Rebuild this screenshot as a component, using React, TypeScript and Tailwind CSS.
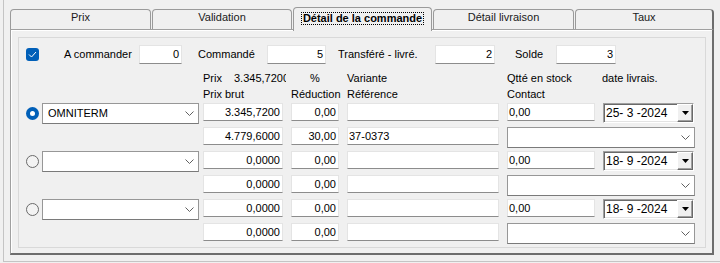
import React from "react";

type MainRow = {
  kind: "main";
  checked: boolean;
  combo: string;
  price: string;
  red: string;
  variante: string;
  qty: string;
  date: string;
};

type SubRow = {
  kind: "sub";
  price: string;
  red: string;
  ref: string;
};

const ROWS: (MainRow | SubRow)[] = [
  { kind: "main", checked: true, combo: "OMNITERM", price: "3.345,7200", red: "0,00", variante: "", qty: "0,00", date: "25- 3 -2024" },
  { kind: "sub", price: "4.779,6000", red: "30,00", ref: "37-0373" },
  { kind: "main", checked: false, combo: "", price: "0,0000", red: "0,00", variante: "", qty: "0,00", date: "18- 9 -2024" },
  { kind: "sub", price: "0,0000", red: "0,00", ref: "" },
  { kind: "main", checked: false, combo: "", price: "0,0000", red: "0,00", variante: "", qty: "0,00", date: "18- 9 -2024" },
  { kind: "sub", price: "0,0000", red: "0,00", ref: "" },
];

const TABS = ["Prix", "Validation", "Détail de la commande", "Détail livraison", "Taux"];

function Chevron() {
  return (
    <svg width="9" height="5" viewBox="0 0 9 5" className="shrink-0">
      <polyline points="0.5,0.5 4.5,4.5 8.5,0.5" fill="none" stroke="#606060" strokeWidth="1" />
    </svg>
  );
}

function TextBox({ value, w, left = false, h = "h-[18px]" }: { value: string; w: string; left?: boolean; h?: string }) {
  return (
    <div
      className={`${w} ${h} shrink-0 bg-white border border-[#e4e4e4] border-b-[#8c8c8c] leading-[16px] whitespace-nowrap overflow-hidden ${
        left ? "text-left pl-[1px]" : "text-right pr-[2px]"
      }`}
    >
      {value}
    </div>
  );
}

function Combo({ value, w }: { value: string; w: string }) {
  return (
    <div className={`${w} h-[21px] shrink-0 bg-white border border-[#979797] border-b-[#7a7a7a] flex items-center justify-between pl-[5px] pr-[4px]`}>
      <span className="whitespace-nowrap">{value}</span>
      <Chevron />
    </div>
  );
}

function DateBox({ value }: { value: string }) {
  return (
    <div className="w-[91px] h-[20px] shrink-0 bg-white border border-t-[#a0a0a0] border-l-[#a0a0a0] border-b-white border-r-white shadow-[inset_1px_1px_0_#696969,inset_-1px_-1px_0_#e3e3e3] flex items-center">
      <span className="pl-[2px] text-[12px] whitespace-nowrap">{value}</span>
      <div className="ml-auto w-[16px] h-full bg-[#f0f0f0] border border-t-white border-l-white border-b-[#696969] border-r-[#696969] shadow-[inset_-1px_-1px_0_#a0a0a0] flex items-center justify-center">
        <svg width="7" height="4" viewBox="0 0 7 4">
          <polygon points="0,0 7,0 3.5,4" fill="#000" />
        </svg>
      </div>
    </div>
  );
}

function Radio({ on }: { on: boolean }) {
  return on ? (
    <div className="w-[13px] h-[13px] shrink-0 rounded-full bg-[#005fb8] flex items-center justify-center mt-[4px]">
      <div className="w-[5px] h-[5px] rounded-full bg-white" />
    </div>
  ) : (
    <div className="w-[13px] h-[13px] shrink-0 rounded-full border border-[#6a6a6a] bg-[#f3f3f3] mt-[4px]" />
  );
}

export default function App() {
  return (
    <div className="w-[720px] h-[263px] bg-[#f0f0f0] text-[11px] text-black font-['Liberation_Sans',Arial,sans-serif] overflow-hidden">
      <div className="ml-[3px] h-[262px] border-l border-b border-[#c4c4c4] pl-[6px] pt-[7px]">
        {/* tabs */}
        <div className="flex items-end h-[22px]">
          {TABS.map((t, i) => {
            const active = i === 2;
            const widths = ["w-[141px]", "w-[140px]", "w-[139px]", "w-[141px]", "w-[139px]"];
            if (active) {
              return (
                <div
                  key={t}
                  className={`${widths[i]} ml-[1px] h-[24px] -mb-[2px] relative z-10 bg-[#f0f0f0] border-t border-l border-r border-[#9a9a9a] rounded-t-[4px] flex justify-center pt-[4px]`}
                >
                  <span className="h-[13px] leading-[11px] font-bold border border-dotted border-black px-[1px] whitespace-nowrap">
                    {t}
                  </span>
                </div>
              );
            }
            return (
              <div
                key={t}
                className={`${widths[i]} ${i === 0 ? "" : "ml-[1px]"} h-[20px] border-t border-l border-r border-[#9a9a9a] ${
                  i === 4 ? "border-r-2 border-r-[#6d6d6d]" : ""
                } rounded-t-[4px] text-center pt-[1px] leading-[13px] text-[#1a1a1a]`}
              >
                {t}
              </div>
            );
          })}
        </div>

        {/* panel */}
        <div className="w-[704px] h-[226px] border-t border-l border-[#a0a0a0] border-r-2 border-b-2 border-r-[#6d6d6d] border-b-[#6d6d6d] shadow-[inset_1px_1px_0_#ffffff] pl-[7px] pt-[7px]">
          <div className="w-[688px] h-[211px] border border-[#d9d9d9] pl-[7px] pt-[7px]">
            {/* summary row */}
            <div className="flex items-center h-[19px]">
              <div className="w-[13px] h-[13px] shrink-0 rounded-[3px] bg-[#005fb8] flex items-center justify-center">
                <svg width="9" height="7" viewBox="0 0 9 7">
                  <polyline points="1,3.5 3.5,6 8,1" fill="none" stroke="#fff" strokeWidth="1" />
                </svg>
              </div>
              <span className="ml-[25px] w-[75px] shrink-0">A commander</span>
              <TextBox value="0" w="w-[43px]" h="h-[19px]" />
              <span className="ml-[16px] w-[69px] shrink-0">Commandé</span>
              <TextBox value="5" w="w-[59px]" h="h-[19px]" />
              <span className="ml-[12px] w-[97px] shrink-0 whitespace-nowrap">Transféré - livré.</span>
              <TextBox value="2" w="w-[60px]" h="h-[19px]" />
              <span className="ml-[20px] w-[41px] shrink-0">Solde</span>
              <TextBox value="3" w="w-[60px]" h="h-[19px]" />
            </div>

            {/* headers */}
            <div className="flex mt-[8px] leading-[13px] whitespace-nowrap">
              <div className="w-[177px] shrink-0" />
              <div className="w-[80px] shrink-0 flex">
                <span className="w-[31px] shrink-0">Prix</span>
                <span className="w-[52px] shrink-0 overflow-hidden">3.345,7200</span>
              </div>
              <div className="ml-[8px] w-[48px] shrink-0 text-center">%</div>
              <div className="ml-[8px] w-[152px] shrink-0">Variante</div>
              <div className="ml-[8px] w-[88px] shrink-0">Qtté en stock</div>
              <div className="ml-[7px] w-[91px] shrink-0">date livrais.</div>
            </div>
            <div className="flex mt-[3px] leading-[13px] whitespace-nowrap">
              <div className="w-[177px] shrink-0" />
              <div className="w-[80px] shrink-0">Prix brut</div>
              <div className="ml-[8px] w-[48px] shrink-0">Réduction</div>
              <div className="ml-[8px] w-[152px] shrink-0">Référence</div>
              <div className="ml-[8px] w-[88px] shrink-0">Contact</div>
            </div>

            {/* detail rows */}
            <div className="mt-[2px] flex flex-col">
              {ROWS.map((r, i) =>
                r.kind === "main" ? (
                  <div key={i} className="flex items-start h-[24px]">
                    <Radio on={r.checked} />
                    <div className="ml-[3px]">
                      <Combo value={r.combo} w="w-[157px]" />
                    </div>
                    <div className="ml-[4px]">
                      <TextBox value={r.price} w="w-[80px]" />
                    </div>
                    <div className="ml-[8px]">
                      <TextBox value={r.red} w="w-[48px]" />
                    </div>
                    <div className="ml-[8px]">
                      <TextBox value={r.variante} w="w-[152px]" left />
                    </div>
                    <div className="ml-[8px]">
                      <TextBox value={r.qty} w="w-[88px]" left />
                    </div>
                    <div className="ml-[8px]">
                      <DateBox value={r.date} />
                    </div>
                  </div>
                ) : (
                  <div key={i} className="flex items-start h-[24px]">
                    <div className="w-[177px] shrink-0" />
                    <TextBox value={r.price} w="w-[80px]" />
                    <div className="ml-[8px]">
                      <TextBox value={r.red} w="w-[48px]" />
                    </div>
                    <div className="ml-[8px]">
                      <TextBox value={r.ref} w="w-[152px]" left />
                    </div>
                    <div className="ml-[8px]">
                      <Combo value="" w="w-[188px]" />
                    </div>
                  </div>
                )
              )}
            </div>
          </div>
        </div>
      </div>
    </div>
  );
}
